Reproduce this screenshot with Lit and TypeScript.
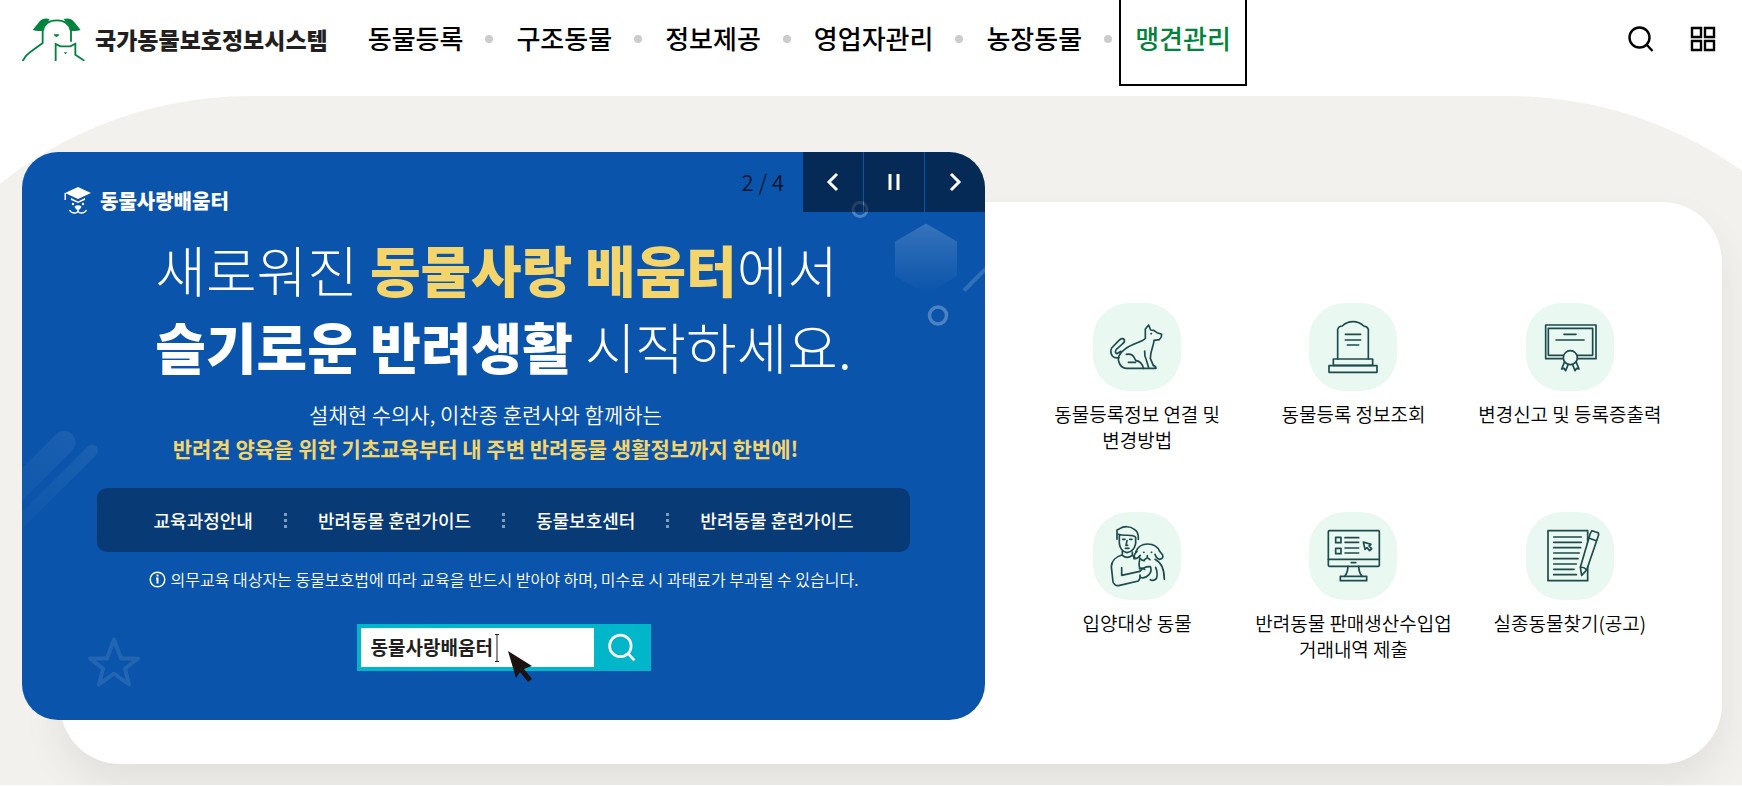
import { LitElement, html, css, svg } from "lit";
import { customElement, property, state } from "lit/decorators.js";
import { classMap } from "lit/directives/class-map.js";

const dogIcon = svg`<svg viewBox="190 39 264 264" aria-hidden="true">
  <path d="M357 105 L347 117 L347 145 C340 156 306 160 285 178 C266 192 262 208 270 222 Q277 235 292 235 H379 Q379 229 371 227 L362 205 C362 180 373 168 373 151 L389 149 Q397 141 396 133 L382 128 L372 121 L363 120 Z"/>
  <path d="M290 193 Q306 190 312 200 L318 211 Q338 215 341 235 M296 217 H318 M345 183 Q344 198 350 210 L357 233"/>
  <path d="M268 203 Q256 206 248 198 Q240 186 246 174 L268 151 Q278 142 284 149 Q286 156 278 162 L260 178 Q254 188 261 191 L274 184"/>
  <path d="M364 131 h1"/></svg>`;

const stoneIcon = svg`<svg viewBox="840 39 264 264" aria-hidden="true">
  <path d="M926 207 V118 Q929 108 940 108 C950 98 960 95 972 95 C984 95 994 98 1004 108 Q1016 110 1018 118 V207"/>
  <rect x="913" y="207" width="118" height="19"/><rect x="900" y="227" width="144" height="20"/>
  <path d="M949 133 H995 M949 150 H995 M955 165 H989"/></svg>`;

const certificateIcon = svg`<svg viewBox="408 39 264 264" aria-hidden="true">
  <rect x="467" y="105" width="151" height="101"/><rect x="475" y="115" width="133" height="81"/>
  <path d="M522 133 H558 M498 150 H582"/>
  <path d="M523 217 L515 237 L522 235 L527 242 L535 222 M559 217 L567 237 L560 235 L555 242 L547 222"/>
  <circle class="patch" cx="541" cy="203" r="21"/></svg>`;

const adoptIcon = svg`<svg viewBox="190 66 264 264" aria-hidden="true">
  <path d="M262 148 V120 L270 116 C282 108 302 108 312 117 Q328 124 326 148"/>
  <path d="M269 137 V160 Q272 184 292 188 Q314 184 318 160 V142 C308 130 286 140 266 133"/>
  <path d="M279 148 H286 M300 148 H307 M292 152 L289 166 H294 M287 175 H298"/>
  <path d="M278 184 V194 C260 200 246 208 245 230 L250 276 Q256 290 270 286 L326 273 Q333 266 331 255 M308 186 V196 L316 202 M278 196 Q292 208 308 196"/>
  <path d="M276 233 V256 L330 244 M330 208 Q326 224 330 236 Q338 232 345 238"/>
  <path d="M318 186 C325 168 340 162 354 162 C372 162 384 170 390 184 L399 195 Q402 207 390 208 Q380 206 376 193 M322 184 Q310 196 313 206 Q324 208 332 196"/>
  <path d="M342 187 h1 M365 187 h1 M345 209 L353 203 L361 209 M353 203 V197 M330 204 Q336 212 344 212 M376 208 Q404 222 404 268 M378 232 Q386 252 380 266 Q372 274 362 269"/>
  <path d="M330 244 Q345 228 362 230 Q368 242 358 254 Q345 268 332 262"/></svg>`;

const monitorIcon = svg`<svg viewBox="840 66 264 264" aria-hidden="true">
  <rect x="898" y="122" width="153" height="107" rx="3"/><path d="M898 208 H1051 M967 218 H980"/>
  <path d="M957 229 Q956 248 947 259 M989 229 Q990 248 999 259"/><rect x="934" y="259" width="79" height="13"/>
  <rect x="920" y="142" width="16" height="16"/><rect x="920" y="175" width="16" height="16"/>
  <path d="M948 143 H989 M948 157 H989 M948 174 H989 M948 189 H989"/>
  <path d="M1003 156 L1008 178 L1014 173 L1022 182 L1028 176 L1020 168 L1026 163 Z"/></svg>`;

const noteIcon = svg`<svg viewBox="408 66 264 264" aria-hidden="true">
  <rect x="474" y="122" width="119" height="150"/>
  <path d="M491 141 H574 M491 157 H574 M491 173 H572 M491 189 H568 M491 206 H564 M491 222 H559 M491 238 H552 M491 254 H559"/>
  <path class="patch" d="M606 122 L624 128 Q628 132 624 140 L590 240 L575 256 L571 232 L601 130 Z"/>
  <path d="M598 145 L619 152 M572 232 Q582 230 590 240"/></svg>`;

const magnifier = svg`<svg viewBox="0 0 26 26" aria-hidden="true"><circle cx="11.500" cy="11.500" r="10"/><path d="M18.500 18.500 L24.500 25"/></svg>`;

@customElement("site-header")
class SiteHeader extends LitElement {
  @property({ type: Array }) items: string[] = [];
  @property() current = "";

  static styles = css`
    :host { display: block; background: #fff; }
    .bar { display: flex; align-items: flex-start; padding: 0 20px 10px 22px; min-height: 86px; box-sizing: content-box; }
    .logo { display: flex; align-items: center; gap: 10px; height: 78px; color: #231f20; text-decoration: none; font-size: 23px; font-weight: 900; white-space: nowrap; }
    .logo svg { width: 63px; height: 43px; }
    .menu { display: flex; list-style: none; margin: 0 0 0 24px; padding: 0; }
    .entry { display: flex; align-items: flex-start; }
    .entry + .entry::before { content: ""; width: 8px; height: 8px; margin: 35px 7px 0 6px; border-radius: 50%; background: #ccc; }
    .link { display: flex; align-items: center; height: 74px; padding: 0 14px 10px; border: 2px solid transparent; border-top: 0; color: #000; font-size: 26px; font-weight: 500; text-decoration: none; white-space: nowrap; }
    .on { color: #00843d; border-color: #000; }
    .tools { display: flex; align-items: center; gap: 24px; height: 78px; margin-left: auto; }
    .tool { display: grid; place-items: center; padding: 6px; margin: 0; border: 0; background: none; cursor: pointer; }
    .tool svg { width: 26px; height: 26px; fill: none; stroke: #000; stroke-width: 2.4; }
  `;

  render() {
    return html`<header class="bar">
      <a class="logo" href="#">
        <svg viewBox="18 24 189 129" aria-hidden="true" fill="none" stroke="#00843d" stroke-width="5.500">
          <path fill="#00843d" stroke="none" d="M50 60 L70 35 Q82 21 101 27 L95 36 Q82 44 79 62 Q64 64 50 60Z M194 60 L174 35 Q162 21 143 27 L149 36 Q162 44 165 62 Q180 64 194 60Z"/>
          <path d="M81 62 Q86 31 122 31 Q158 31 164 62"/>
          <path d="M80 58 V99 L42 127 Q28 136 20 153 M165 58 V95"/>
          <path d="M119 153 V102 L133 109 H163 L178 101 V134 L205 152"/>
          <path fill="#00843d" stroke="none" d="M113 73 h17 q-2 8 -8.500 8 t-8.500 -8z M143 127 h11 l-5.500 6z"/>
        </svg>
        <span>국가동물보호정보시스템</span>
      </a>
      <nav aria-label="주 메뉴"><ul class="menu">
        ${this.items.map((t) => html`<li class="entry"><a href="#" class=${classMap({ link: true, on: t === this.current })}>${t}</a></li>`)}
      </ul></nav>
      <div class="tools">
        <button class="tool" aria-label="검색">${magnifier}</button>
        <button class="tool" aria-label="전체메뉴"><svg viewBox="0 0 26 26" aria-hidden="true"><path d="M2 2h9v9H2z M15 2h9v9h-9z M2 15h9v9H2z M15 15h9v9h-9z"/></svg></button>
      </div>
    </header>`;
  }
}

@customElement("promo-banner")
class PromoBanner extends LitElement {
  @state() private page = 2;
  private total = 4;
  private links = ["교육과정안내", "반려동물 훈련가이드", "동물보호센터", "반려동물 훈련가이드"];

  static styles = css`
    :host { display: block; position: relative; overflow: hidden; border-radius: 36px; background: #0a54ab; color: #fff; }
    .art { position: absolute; inset: 0; width: 100%; height: 100%; }
    .controls { position: absolute; top: 0; right: 0; display: flex; gap: 1px; align-items: center; }
    .count { padding: 0 18px 3px 0; color: #04162e; font-size: 22px; font-weight: 350; }
    .ctl { display: grid; place-items: center; width: 60px; height: 60px; padding: 0; border: 0; background: rgba(0, 0, 0, 0.5); cursor: pointer; }
    .ctl svg { width: 20px; height: 20px; fill: none; stroke: #fff; stroke-width: 3; }
    .body { position: relative; padding: 34px 75px 49px; }
    .brand { display: flex; align-items: center; gap: 9px; height: 28px; margin-left: -33px; font-size: 20px; font-weight: 900; }
    .brand svg { width: 27px; height: 28px; }
    .title { width: fit-content; margin: 16px auto 0; font-size: 55px; line-height: 77px; font-weight: 300; white-space: nowrap; }
    .strong { font-weight: 900; }
    .gold { color: #f4d56b; }
    .lead { margin: 13px 0 0; padding-right: 36px; font-size: 21px; line-height: 34px; font-weight: 350; text-align: center; white-space: nowrap; }
    .lead .gold { display: block; font-weight: 700; }
    .links { display: flex; align-items: center; justify-content: center; gap: 31px; height: 64px; margin-top: 23px; border-radius: 10px; background: #083a75; }
    .links a { color: #fff; font-size: 18px; font-weight: 500; text-decoration: none; white-space: nowrap; }
    .dots { width: 3px; height: 15px; fill: #7f9bbd; }
    .notice { display: flex; align-items: center; justify-content: center; gap: 5px; margin: 15px 0 0; font-size: 16px; line-height: 24px; font-weight: 350; white-space: nowrap; }
    .notice svg { width: 17px; height: 17px; fill: none; stroke: #fff; stroke-width: 2; }
    .search { position: relative; display: flex; width: 294px; height: 47px; box-sizing: border-box; margin: 33px auto 0; padding: 4px 0 4px 4px; background: #00b6c8; }
    .box { display: flex; flex: 1; align-items: center; padding-left: 10px; background: #fff; }
    .box input { width: 123px; height: 36px; padding: 0 0 3px; box-sizing: border-box; border: 0; outline: 0; background: none; color: #231f20; font: inherit; font-size: 19px; font-weight: 700; }
    .beam { width: 6px; height: 28px; fill: none; stroke: #231f20; stroke-width: 1; }
    .go { display: grid; place-items: center; width: 57px; padding: 0; border: 0; background: none; cursor: pointer; }
    .go svg { width: 28px; height: 29px; fill: none; stroke: #fff; stroke-width: 2.5; }
    .pointer { position: absolute; left: 151px; top: 27px; width: 25px; height: 32px; fill: #1a1311; }
  `;

  private step(by: number) {
    this.page = ((this.page - 1 + by + this.total) % this.total) + 1;
  }

  render() {
    const dots = svg`<svg class="dots" viewBox="0 0 3 15" aria-hidden="true"><path d="M0 0h3v3H0z M0 6h3v3H0z M0 12h3v3H0z"/></svg>`;
    return html`
      <svg class="art" viewBox="0 0 963 569" preserveAspectRatio="xMidYMid slice" aria-hidden="true" fill="none" stroke="#fff">
        <defs>
          <linearGradient id="hex" x1="0" y1="0" x2="0" y2="1"><stop offset="0" stop-color="#fff" stop-opacity=".18"/><stop offset="1" stop-color="#fff" stop-opacity="0"/></linearGradient>
          <linearGradient id="ray" gradientUnits="userSpaceOnUse" x1="60" y1="280" x2="-10" y2="360"><stop offset="0" stop-color="#fff" stop-opacity=".07"/><stop offset="1" stop-color="#fff" stop-opacity=".02"/></linearGradient>
        </defs>
        <path d="M904 72 L935 90 V125 L904 142 L873 125 V90 Z" fill="url(#hex)" stroke="none"/>
        <g stroke-opacity=".27"><circle cx="838" cy="58" r="7" stroke-width="3"/><circle cx="916" cy="164" r="8.500" stroke-width="3.500"/></g>
        <path d="M942 139 L970 111" stroke-width="4" stroke-opacity=".16"/>
        <path d="M42 291 L-20 353" stroke="url(#ray)" stroke-width="23" stroke-linecap="round"/>
        <path d="M70 299 L-10 379" stroke="url(#ray)" stroke-width="12" stroke-linecap="round"/>
        <path d="M92 488 L99 507 L116 507 L103 517 L107 533 L92 522 L77 533 L81 517 L68 507 L85 507 Z" stroke-width="4" stroke-opacity=".1" stroke-linejoin="round"/>
      </svg>
      <div class="body">
        <div class="brand">
          <svg viewBox="64 186 27 28" aria-hidden="true" fill="#fff">
            <path d="M78 187 L91 193 L78 199 L65 193 Z M64.500 193 h1.500 v7 h-1.500z"/>
            <path d="M71 198 L78 201.500 L85 198 V200 L78 203 L71 200 Z"/>
            <circle cx="73" cy="204" r="1.200"/><circle cx="83" cy="204" r="1.200"/>
            <path d="M74.500 206.500 Q78 204 81.500 206.500 Q80 210 78 210 T74.500 206.500Z"/>
            <path d="M69.500 210 Q71 213 74.500 213 Q78 213 78 210 Q78 213 81.500 213 Q85 213 86.500 210" fill="none" stroke="#fff" stroke-width="1.300"/>
          </svg>
          <span>동물사랑배움터</span>
        </div>
        <h2 class="title">새로워진 <span class="strong gold">동물사랑 배움터</span>에서<br /><span class="strong">슬기로운 반려생활</span> 시작하세요.</h2>
        <p class="lead">설채현 수의사, 이찬종 훈련사와 함께하는
          <span class="gold">반려견 양육을 위한 기초교육부터 내 주변 반려동물 생활정보까지 한번에!</span></p>
        <nav class="links" aria-label="배움터 바로가기">
          ${this.links.map((t, i) => html`${i ? dots : ""}<a href="#">${t}</a>`)}
        </nav>
        <p class="notice"><svg viewBox="0 0 17 17" aria-hidden="true"><circle cx="8.500" cy="8.500" r="7.300" stroke-width="1.500"/><path d="M8.500 3.500v2 M7 7.500h1.500v5"/></svg>
          <span>의무교육 대상자는 동물보호법에 따라 교육을 반드시 받아야 하며, 미수료 시 과태료가 부과될 수 있습니다.</span></p>
        <form class="search" @submit=${(e: Event) => e.preventDefault()}>
          <div class="box"><input aria-label="검색어" value="동물사랑배움터" /><svg class="beam" viewBox="0 0 6 28" aria-hidden="true"><path d="M1 .5h4 M3 .5v27 M1 27.500h4"/></svg></div>
          <button class="go" aria-label="검색">${magnifier}</button>
          <svg class="pointer" viewBox="0 0 25 32" aria-hidden="true"><path d="M0 0 L24 15 L16 18 L24 28 L20 31 L12 21 L8 27 Z"/></svg>
        </form>
      </div>
      <div class="controls">
        <span class="count">${this.page} / ${this.total}</span>
        <button class="ctl" aria-label="이전" @click=${() => this.step(-1)}><svg viewBox="0 0 20 20"><path d="M14 2 L6 10 L14 18"/></svg></button>
        <button class="ctl" aria-label="정지"><svg viewBox="0 0 20 20"><path d="M6 2v16 M14 2v16"/></svg></button>
        <button class="ctl" aria-label="다음" @click=${() => this.step(1)}><svg viewBox="0 0 20 20"><path d="M6 2 L14 10 L6 18"/></svg></button>
      </div>`;
  }
}

@customElement("quick-links")
class QuickLinks extends LitElement {
  private items = [
    { icon: dogIcon, label: "동물등록정보 연결 및 변경방법" },
    { icon: stoneIcon, label: "동물등록 정보조회" },
    { icon: certificateIcon, label: "변경신고 및 등록증출력" },
    { icon: adoptIcon, label: "입양대상 동물" },
    { icon: monitorIcon, label: "반려동물 판매생산수입업 거래내역 제출" },
    { icon: noteIcon, label: "실종동물찾기(공고)" },
  ];

  static styles = css`
    :host { display: block; }
    .grid { display: grid; grid-template-columns: repeat(3, 1fr); row-gap: 59px; list-style: none; margin: 0; padding: 0; }
    .item { display: flex; flex-direction: column; align-items: center; gap: 10px; padding: 0 6px; color: #000; font-size: 19px; line-height: 26px; font-weight: 350; text-align: center; text-decoration: none; word-break: keep-all; }
    .disc { display: block; width: 88px; height: 88px; border-radius: 36px; background: #e9f8f1; }
    .disc svg { display: block; width: 88px; height: 88px; fill: none; stroke: #1d4a4c; stroke-width: 5; stroke-linecap: round; stroke-linejoin: round; }
    .patch { fill: #e9f8f1; }
  `;

  render() {
    return html`<ul class="grid">
      ${this.items.map((i) => html`<li><a class="item" href="#"><span class="disc">${i.icon}</span><span>${i.label}</span></a></li>`)}
    </ul>`;
  }
}

@customElement("app-root")
class AppRoot extends LitElement {
  static styles = css`
    :host { display: block; overflow: hidden; background: #fff; color: #000; font-family: "Noto Sans CJK KR", "Noto Sans", sans-serif; }
    .arch { margin: 0 -167px 0 -150px; padding: 56px 187px 21px 172px; border-radius: 400px 400px 0 0; background: #f2f1ed; }
    .hero { display: grid; grid-template-columns: 963fr 737fr; }
    .card { grid-area: 1 / 1 / 2 / 3; margin: 50px 0 0 38px; border-radius: 60px; background: #fff; box-shadow: 0 20px 40px rgba(0, 0, 0, 0.07); }
    .promo { grid-area: 1 / 1 / 2 / 2; margin-bottom: 44px; }
    .quick { grid-area: 1 / 2 / 2 / 3; padding: 151px 44px 60px; }
  `;

  render() {
    return html`
      <site-header .items=${["동물등록", "구조동물", "정보제공", "영업자관리", "농장동물", "맹견관리"]} current="맹견관리"></site-header>
      <main class="arch">
        <section class="hero">
          <div class="card"></div>
          <promo-banner class="promo"></promo-banner>
          <quick-links class="quick"></quick-links>
        </section>
      </main>`;
  }
}
